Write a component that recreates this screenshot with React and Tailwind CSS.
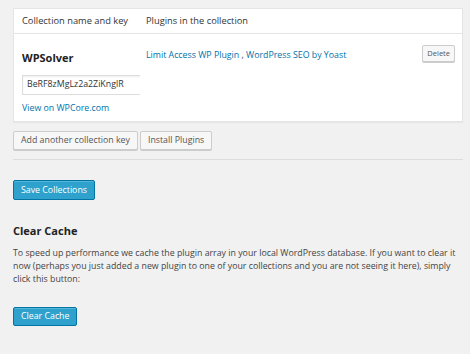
export default function App() {
  const font = { fontFamily: '"Open Sans", "Noto Sans", sans-serif' };
  return (
    <div className="w-[470px] h-[354px] bg-[#f1f1f1] text-[#444] overflow-hidden" style={font}>
      <div className="pl-[13px] pr-[7px] pt-[8px]">
        <div className="bg-white border border-[#e5e5e5] shadow-[0_1px_1px_rgba(0,0,0,0.04)]">
          <div className="flex h-[25px] items-center pl-[8px] border-b border-[#e5e5e5] text-[9.3px] text-[#333]">
            <div className="w-[118px]">Collection name and key</div>
            <div className="ml-[6px]">Plugins in the collection</div>
          </div>
          <div className="flex pl-[8px] pr-[7px] h-[87px]">
            <div className="w-[118px] overflow-hidden shrink-0">
              <div className="mt-[16px] text-[11px] font-bold text-[#222] leading-[16px]">WPSolver</div>
              <div className="mt-[9px] w-[130px] h-[20px] border border-[#ddd] shadow-[inset_0_1px_2px_rgba(0,0,0,0.07)] flex items-center pl-[4px] text-[8.8px] text-[#333]">
                BeRF8zMgLz2a2ZiKnglR
              </div>
              <div className="mt-[7px] text-[8.8px] text-[#0073aa] leading-[13px]">View on WPCore.com</div>
            </div>
            <div className="ml-[6px] flex-1 pt-[15px] text-[8.8px] text-[#0073aa] leading-[13px]">
              Limit Access WP Plugin <span className="text-[#444]">,</span> WordPress SEO by Yoast
            </div>
            <div className="pt-[4px]">
              <button className="h-[17px] px-[4px] border border-[#ccc] bg-[#f7f7f7] rounded-[2px] text-[7.5px] text-[#555] shadow-[0_1px_0_#ccc] leading-none">
                Delete
              </button>
            </div>
          </div>
        </div>
        <div className="flex gap-[2px] mt-[9px]">
          <button className="h-[19px] px-[7px] border border-[#ccc] bg-[#f7f7f7] rounded-[2px] text-[8.8px] text-[#555] shadow-[0_1px_0_#ccc] leading-none">
            Add another collection key
          </button>
          <button className="h-[19px] px-[7px] border border-[#ccc] bg-[#f7f7f7] rounded-[2px] text-[8.8px] text-[#555] shadow-[0_1px_0_#ccc] leading-none">
            Install Plugins
          </button>
        </div>
        <div className="mt-[9px] h-px bg-[#ddd]"></div>
        <button className="mt-[20px] h-[20px] px-[7px] border border-[#0074a2] bg-[#2ea2cc] rounded-[2px] text-[8.8px] text-white shadow-[inset_0_1px_0_rgba(120,200,230,0.5)] leading-none">
          Save Collections
        </button>
        <div className="mt-[23px] text-[11px] font-bold text-[#222] leading-[16px]">Clear Cache</div>
        <p className="mt-[8px] text-[8.8px] leading-[13px] text-[#444]">
          To speed up performance we cache the plugin array in your local WordPress database. If you want to clear it now (perhaps you just added a new plugin to one of your collections and you are not seeing it here), simply click this button:
        </p>
        <button className="mt-[21px] h-[19px] px-[7px] border border-[#0074a2] bg-[#2ea2cc] rounded-[2px] text-[8.8px] text-white shadow-[inset_0_1px_0_rgba(120,200,230,0.5)] leading-none">
          Clear Cache
        </button>
      </div>
    </div>
  );
}
